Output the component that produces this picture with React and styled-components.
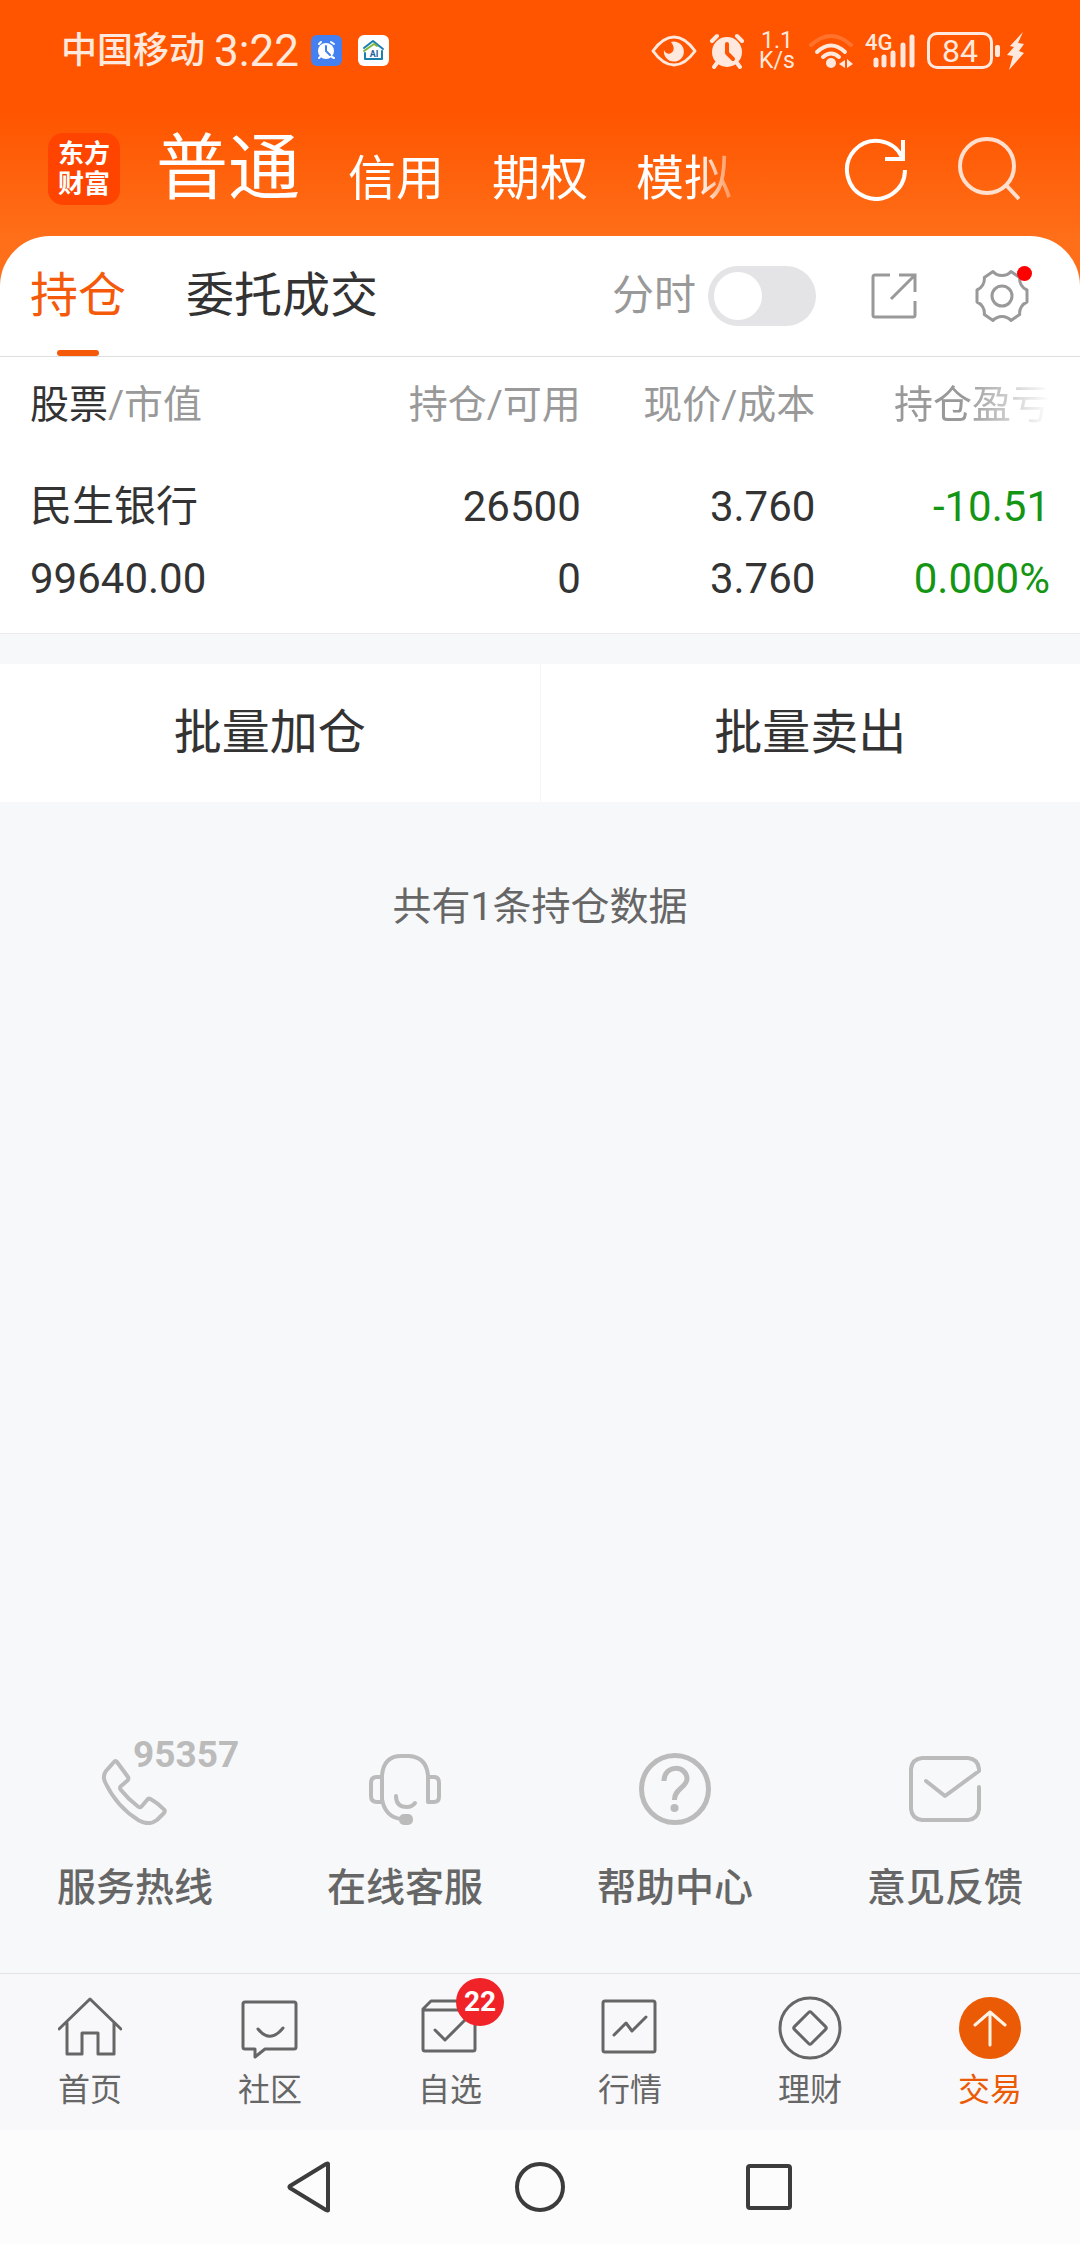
import { useState } from "react";
import styled, { createGlobalStyle } from "styled-components";

const holdings = [
	{
		name: "民生银行",
		value: "99640.00",
		amount: "26500",
		available: "0",
		price: "3.760",
		cost: "3.760",
		profit: "-10.51",
		percent: "0.000%",
	},
];

const Icon = ({ size = 64, width, height, stroke = 2, children }) => (
	<svg
		width={width || size}
		height={height || size}
		viewBox={`0 0 ${width || size} ${height || size}`}
		fill="none"
		stroke="currentColor"
		strokeWidth={stroke}
		strokeLinecap="round"
		strokeLinejoin="round"
		aria-hidden="true"
	>
		{children}
	</svg>
);

const EyeIcon = () => (
	<Icon width={46} height={34} stroke={3}>
		<path d="M2 17Q12 3 23 3T44 17Q34 31 23 31T2 17Z" />
		<path
			d="M20 8A10 10 0 1 1 13 16C16 24 28 18 20 8Z"
			fill="currentColor"
			stroke="none"
		/>
	</Icon>
);

const AlarmIcon = () => (
	<Icon size={36} stroke={4}>
		<circle cx="18" cy="19" r="15" fill="currentColor" stroke="none" />
		<path d="M3 8l5-5M28 3l5 5M8 30l-3 4M28 30l3 4" />
		<path d="M18 11v9l6 6" stroke="#ff5500" />
	</Icon>
);

const WifiIcon = () => (
	<Icon width={44} height={36} stroke={4}>
		<path d="M2 12Q22-6 42 12" opacity="0.2" />
		<path d="M8 19Q22 6 36 19" />
		<path d="M14 24Q22 17 30 24" />
		<circle cx="22" cy="30" r="5" fill="currentColor" stroke="none" />
		<path
			d="M30 31l6-4v8zM38 26v9l6-4z"
			fill="currentColor"
			stroke="none"
		/>
	</Icon>
);

const SignalIcon = () => (
	<Icon width={50} height={36} stroke={5}>
		<path d="M11 27v5M19 24v8M28 20v12M38 12v20M47 4v28" />
	</Icon>
);

const BoltIcon = () => (
	<Icon width={17} height={38}>
		<path
			d="M16 0L3 14l4 1-7 8 6 1-4 14L17 21l-5-2 5-7-6-1z"
			fill="currentColor"
			stroke="none"
		/>
	</Icon>
);

const ClockAppIcon = () => (
	<Icon size={31} stroke={2}>
		<rect width="31" height="31" rx="6" fill="#4480ef" stroke="none" />
		<circle cx="15" cy="16" r="8" fill="#fff" stroke="none" />
		<path d="M8 9l2-2M20 7l3 2M9 22l-1 1M21 22l2 1" stroke="#fff" />
		<path d="M15 11v5l4 4" stroke="#4480ef" />
	</Icon>
);

const HomeAppIcon = () => (
	<Icon size={31} stroke={2}>
		<rect width="31" height="31" rx="6" fill="#fff" stroke="none" />
		<path d="M6 13L15 6l10 8M7 18v6h17v-8" stroke="#1b7fae" />
		<path d="M6 16l10-7 3 2" stroke="#7db83a" />
		<text
			x="16"
			y="22"
			fill="#1f5f9f"
			stroke="none"
			fontSize="9"
			fontWeight="700"
			textAnchor="middle"
		>
			AI
		</text>
	</Icon>
);

const RefreshIcon = () => (
	<svg width="64" height="64" viewBox="0 0 64 64" fill="none" stroke="currentColor" strokeWidth="4">
		<path d="M61 33A29 29 0 1 1 58 20" />
		<path d="M59 3v19H41" />
	</svg>
);

const SearchIcon = () => (
	<svg width="64" height="64" viewBox="0 0 64 64" fill="none" stroke="currentColor" strokeWidth="4">
		<circle cx="31" cy="29" r="27" />
		<path d="M50 48l13 14" />
	</svg>
);

const ShareIcon = () => (
	<svg width="48" height="48" viewBox="0 0 48 48" fill="none" stroke="currentColor" strokeWidth="3">
		<path d="M20 3H5Q3 3 3 5V43Q3 45 5 45H43Q45 45 45 43V29M29 3H45V20M45 3L21 27" />
	</svg>
);

const GearIcon = () => (
	<Icon size={60} stroke={3}>
		<path d="M55 36A12 12 0 0 0 47.7 48.5L39 54.5A12 12 0 0 0 21 54.5L12.3 48.5A12 12 0 0 0 5 36V24A12 12 0 0 0 12.3 11.5L21 5.5A12 12 0 0 0 39 5.5L47.7 11.5A12 12 0 0 0 55 24Z" />
		<circle cx="30" cy="30" r="10" />
	</Icon>
);

const services = [
	{
		label: "服务热线",
		number: "95357",
		icon: (
			<Icon size={72} stroke={4}>
				<path d="M15 9Q16.500 7 18 9L29 24Q30 26 28.500 27.500L21.500 33.500Q20.500 35 21.500 36.500Q29 46 39 53.500Q41 55 42.500 53.500L48 47Q49.500 45 51.500 46Q59 50 65 56.500Q66.500 58 65 60L58 67Q50 73 40 67.500Q18 54 6.500 30Q3 23 7 18Z" />
			</Icon>
		),
	},
	{
		label: "在线客服",
		icon: (
			<Icon size={72} stroke={4}>
				<path d="M13 24V46Q16 64 32 66M13 24V22Q15 3 32 3H40Q57 4 59 22V49H65Q70 49 70 44V30Q70 24 65 24H59M13 24H8Q2 24 2 30V43Q2 49 8 49H13" />
				<path d="M27 43Q27 54 38 54Q43 54 46 50" />
				<rect x="30" y="61" width="14" height="11" rx="5" fill="currentColor" stroke="none" />
			</Icon>
		),
	},
	{
		label: "帮助中心",
		icon: (
			<svg width="72" height="72" viewBox="0 0 72 72" fill="none" stroke="currentColor" strokeWidth="5">
				<circle cx="36" cy="36" r="33.500" />
				<path d="M25 28C25 11 48 12 48 26C48 34 35 36 35.500 47" />
				<circle cx="35.500" cy="55" r="4" fill="currentColor" stroke="none" />
			</svg>
		),
	},
	{
		label: "意见反馈",
		icon: (
			<Icon size={72} stroke={4}>
				<path d="M70 34V56Q69 66 59 67H13Q3 66 2 56V16Q3 6 13 5H59Q69 6 70 16V18L36 43L17 28" />
			</Icon>
		),
	},
];

const tabs = [
	{
		label: "首页",
		icon: <path d="M1 33L32 3l31 30M9 27V58H24V37H40V58H56V27" />,
	},
	{
		label: "社区",
		icon: (
			<>
				<path d="M7 6H56Q58 6 58 8V51Q58 53 56 53H27L17 61V53H7Q5 53 5 51V8Q5 6 7 6Z" />
				<path d="M20 33Q32 48 45 32" />
			</>
		),
	},
	{
		label: "自选",
		badge: "22",
		icon: (
			<>
				<path d="M5 14H57V53Q57 55 55 55H7Q5 55 5 53V13L13 5H49L57 13" />
				<path d="M17 34l10 10L47 24" />
			</>
		),
	},
	{
		label: "行情",
		icon: (
			<>
				<rect x="5" y="5" width="52" height="51" rx="2" />
				<path d="M16 39L28 27l6 8L48 21" />
			</>
		),
	},
	{
		label: "理财",
		icon: (
			<>
				<circle cx="32" cy="32" r="30" />
				<rect x="20" y="20" width="24" height="24" rx="2" transform="rotate(45 32 32)" />
			</>
		),
	},
	{
		label: "交易",
		active: true,
		icon: (
			<>
				<circle cx="32" cy="32" r="31" fill="currentColor" stroke="none" />
				<path d="M32 49V16M17 29L32 16l15 13" stroke="#fff3e6" />
			</>
		),
	},
];

const App = () => {
	const [timeline, setTimeline] = useState(false);

	return (
		<Page>
			<GlobalStyle />
			<Top>
				<StatusBar>
					<Carrier>中国移动</Carrier>
					<Clock>3:22</Clock>
					<StatusApps>
						<ClockAppIcon />
						<HomeAppIcon />
					</StatusApps>
					<StatusIcons>
						<EyeIcon />
						<AlarmIcon />
						<Speed>
							1.1
							<br />
							K/s
						</Speed>
						<WifiIcon />
						<Signal>
							<SignalIcon />
							<Network>4G</Network>
						</Signal>
						<Power>
							<Battery>84</Battery>
							<BoltIcon />
						</Power>
					</StatusIcons>
				</StatusBar>
				<Header>
					<Logo>
						东方
						<br />
						财富
					</Logo>
					<AccountNav aria-label="账户">
						<AccountButton $active>普通</AccountButton>
						<AccountButton>信用</AccountButton>
						<AccountButton>期权</AccountButton>
						<AccountButton>模拟</AccountButton>
					</AccountNav>
					<HeaderActions>
						<IconButton aria-label="刷新">
							<RefreshIcon />
						</IconButton>
						<IconButton aria-label="搜索" $soft>
							<SearchIcon />
						</IconButton>
					</HeaderActions>
				</Header>
			</Top>

			<Panel>
				<PanelBar>
					<PanelTab $active>持仓</PanelTab>
					<PanelTab>委托成交</PanelTab>
					<PanelTools>
						<SwitchLabel htmlFor="timeline">
							分时
							<Switch
								id="timeline"
								type="checkbox"
								role="switch"
								checked={timeline}
								onChange={(event) => setTimeline(event.target.checked)}
							/>
						</SwitchLabel>
						<IconButton aria-label="分享">
							<ShareIcon />
						</IconButton>
						<IconButton aria-label="设置">
							<GearIcon />
							<Dot />
						</IconButton>
					</PanelTools>
				</PanelBar>
				<Table>
					<thead>
						<tr>
							<HeadCell scope="col">
								<Strong>股票</Strong>/市值
							</HeadCell>
							<HeadCell scope="col">持仓/可用</HeadCell>
							<HeadCell scope="col">现价/成本</HeadCell>
							<HeadCell scope="col">
								<Fade>持仓盈亏</Fade>
							</HeadCell>
						</tr>
					</thead>
					<tbody>
						{holdings.map((item) => (
							<tr key={item.name}>
								<Cell>
									<Line>{item.name}</Line>
									<Line>{item.value}</Line>
								</Cell>
								<Cell>
									<Line>{item.amount}</Line>
									<Line>{item.available}</Line>
								</Cell>
								<Cell>
									<Line>{item.price}</Line>
									<Line>{item.cost}</Line>
								</Cell>
								<Cell $down>
									<Line>{item.profit}</Line>
									<Line>{item.percent}</Line>
								</Cell>
							</tr>
						))}
					</tbody>
				</Table>
			</Panel>

			<Batch>
				<BatchButton>批量加仓</BatchButton>
				<BatchButton>批量卖出</BatchButton>
			</Batch>
			<Summary>共有1条持仓数据</Summary>

			<Services>
				{services.map((item) => (
					<ServiceLink key={item.label} href="#">
						<IconBox>
							{item.icon}
							{item.number && <Hotline>{item.number}</Hotline>}
						</IconBox>
						{item.label}
					</ServiceLink>
				))}
			</Services>

			<TabBar>
				{tabs.map((item) => (
					<TabLink key={item.label} href="#" $active={item.active}>
						<IconBox>
							<Icon stroke={3}>{item.icon}</Icon>
							{item.badge && <Badge>{item.badge}</Badge>}
						</IconBox>
						{item.label}
					</TabLink>
				))}
			</TabBar>

			<SystemBar>
				<IconButton aria-label="返回">
					<Icon size={56} stroke={4}>
						<path d="M46 5V51Q46 52 44 51L8 29Q7 28 8 27L44 5Q46 4 46 5Z" />
					</Icon>
				</IconButton>
				<IconButton aria-label="主屏幕">
					<Icon size={56} stroke={4}>
						<circle cx="28" cy="28" r="23" />
					</Icon>
				</IconButton>
				<IconButton aria-label="最近任务">
					<Icon size={56} stroke={4}>
						<rect x="6" y="7" width="42" height="42" rx="2" />
					</Icon>
				</IconButton>
			</SystemBar>
		</Page>
	);
};

const GlobalStyle = createGlobalStyle`
	* {
		box-sizing: border-box;
	}

	body {
		margin: 0;
		background: #f7f8fa;
		color: #333;
		font-family: Roboto, "Noto Sans CJK SC", sans-serif;
	}

	button {
		border: 0;
		padding: 0;
		background: none;
		color: inherit;
		font: inherit;
		cursor: pointer;
	}

	a {
		color: inherit;
		text-decoration: none;
	}

	svg {
		display: block;
		flex: none;
	}
`;

const Page = styled.div`
	min-height: 100vh;
	display: flex;
	flex-direction: column;
`;

const Top = styled.div`
	margin-bottom: -60px;
	padding-bottom: 60px;
	background: linear-gradient(#ff5500 112px, #ff6e18 236px);
	color: #fff;
`;

const StatusBar = styled.div`
	height: 101px;
	padding: 0 56px 0 61px;
	display: flex;
	align-items: center;
	color: #ffe9de;
`;

const Carrier = styled.span`
	font-size: 36px;
	font-weight: 500;
	line-height: 48px;
`;

const Clock = styled.span`
	margin-left: 9px;
	font-size: 44px;
	line-height: 48px;
`;

const StatusApps = styled.div`
	margin-left: 12px;
	display: flex;
	gap: 16px;
`;

const StatusIcons = styled.div`
	margin-left: auto;
	display: flex;
	align-items: center;
	gap: 12px;
`;

const Speed = styled.div`
	width: 40px;
	font-size: 23px;
	line-height: 20px;
	text-align: center;
`;

const Signal = styled.div`
	position: relative;
`;

const Network = styled.span`
	position: absolute;
	top: 0;
	left: 0;
	font-size: 22px;
	font-weight: 500;
	line-height: 20px;
`;

const Power = styled.div`
	display: flex;
	align-items: center;
	gap: 14px;
`;

const Battery = styled.div`
	position: relative;
	width: 66px;
	height: 37px;
	border: 3px solid;
	border-radius: 10px;
	font-size: 32px;
	line-height: 32px;
	text-align: center;

	&:after {
		content: "";
		position: absolute;
		top: 10px;
		right: -10px;
		width: 5px;
		height: 12px;
		border-radius: 2px;
		background: currentColor;
	}
`;

const Header = styled.header`
	height: 135px;
	padding: 0 60px 0 48px;
	display: flex;
	align-items: center;
`;

const Logo = styled.div`
	width: 72px;
	height: 72px;
	padding: 6px 0;
	border-radius: 15px;
	background: #ff4400;
	font-size: 26px;
	font-weight: 700;
	line-height: 30px;
	text-align: center;
`;

const AccountNav = styled.nav`
	flex: 1;
	min-width: 0;
	margin-left: 36px;
	display: flex;
	align-items: flex-end;
	gap: 48px;
	mask-image: linear-gradient(
		to right,
		#000 calc(100% - 146px),
		transparent calc(100% - 98px)
	);
`;

const AccountButton = styled.button`
	flex: none;
	font-size: ${(props) => (props.$active ? "72px" : "48px")};
	line-height: ${(props) => (props.$active ? "84px" : "64px")};
`;

const HeaderActions = styled.div`
	display: flex;
	gap: 48px;
`;

const IconButton = styled.button`
	position: relative;
	opacity: ${(props) => (props.$soft ? 0.8 : 1)};
`;

const Panel = styled.main`
	border-radius: 50px 50px 0 0;
	border-bottom: 1px solid #ebebed;
	background: #fff;
`;

const PanelBar = styled.div`
	height: 121px;
	padding: 0 48px 0 30px;
	border-bottom: 1px solid #dedede;
	display: flex;
	gap: 60px;
`;

const PanelTab = styled.button`
	position: relative;
	color: ${(props) => (props.$active ? "#f55a0a" : "#333")};
	font-size: 48px;
	line-height: 64px;

	&:after {
		content: "";
		display: ${(props) => (props.$active ? "block" : "none")};
		position: absolute;
		bottom: 0;
		left: calc(50% - 21px);
		width: 42px;
		height: 6px;
		border-radius: 3px;
		background: currentColor;
	}
`;

const PanelTools = styled.div`
	margin-left: auto;
	display: flex;
	align-items: center;
	gap: 54px;
	color: #999;
`;

const SwitchLabel = styled.label`
	display: flex;
	align-items: center;
	gap: 12px;
	font-size: 42px;
	line-height: 60px;
`;

const Switch = styled.input`
	appearance: none;
	width: 108px;
	height: 60px;
	margin: 0;
	padding: 6px;
	border-radius: 30px;
	background: #e4e4e6;
	cursor: pointer;

	&:before {
		content: "";
		display: block;
		width: 48px;
		height: 48px;
		border-radius: 50%;
		background: #fff;
	}

	&:checked {
		background: #f55a0a;
	}

	&:checked:before {
		margin-left: auto;
	}
`;

const Dot = styled.span`
	position: absolute;
	top: 0;
	right: 0;
	width: 15px;
	height: 15px;
	border-radius: 50%;
	background: #f00;
`;

const Table = styled.table`
	width: calc(100% - 60px);
	margin: 0 30px;
	border-collapse: collapse;
	table-layout: fixed;
`;

const HeadCell = styled.th`
	width: 23%;
	height: 96px;
	padding: 0;
	color: #999;
	font-size: 39px;
	font-weight: 400;
	line-height: 60px;
	text-align: right;
	white-space: nowrap;

	&:first-child {
		width: 31%;
		text-align: left;
	}
`;

const Strong = styled.span`
	color: #333;
`;

const Fade = styled.span`
	mask-image: linear-gradient(to right, #000 45%, transparent);
`;

const Cell = styled.td`
	padding: 18px 0;
	color: ${(props) => (props.$down ? "#149614" : "#333")};
	font-size: 42px;
	text-align: right;

	&:first-child {
		text-align: left;
	}
`;

const Line = styled.div`
	line-height: 72px;
`;

const Batch = styled.div`
	margin-top: 30px;
	display: flex;
	background: #fff;
`;

const BatchButton = styled.button`
	flex: 1;
	height: 138px;
	font-size: 48px;
	line-height: 64px;

	&:first-child {
		border-right: 1px solid #f5f5f7;
	}
`;

const Summary = styled.p`
	margin: 80px 0;
	color: #666;
	font-size: 39px;
	line-height: 50px;
	text-align: center;
`;

const Services = styled.div`
	margin-top: auto;
	padding-bottom: 60px;
	display: grid;
	grid-template-columns: repeat(4, 1fr);
`;

const ServiceLink = styled.a`
	display: flex;
	flex-direction: column;
	align-items: center;
	gap: 38px;
	color: #666;
	font-size: 39px;
	font-weight: 500;
	line-height: 50px;

	svg {
		color: #bbb;
	}
`;

const IconBox = styled.span`
	position: relative;
`;

const Hotline = styled.span`
	position: absolute;
	top: -16px;
	left: 34px;
	color: #bbb;
	font-size: 37px;
	font-weight: 700;
	line-height: 36px;
`;

const TabBar = styled.nav`
	border-top: 1px solid #e2e3e5;
	background: #f8f8fa;
	display: grid;
	grid-template-columns: repeat(6, 1fr);
`;

const TabLink = styled.a`
	padding: 22px 0 20px;
	display: flex;
	flex-direction: column;
	align-items: center;
	gap: 10px;
	color: ${(props) => (props.$active ? "#eb5a05" : "#666")};
	font-size: 32px;
	line-height: 40px;
`;

const Badge = styled.span`
	position: absolute;
	top: -18px;
	left: 38px;
	width: 48px;
	height: 48px;
	border-radius: 50%;
	background: #f02428;
	color: #fff;
	font-size: 28px;
	font-weight: 700;
	line-height: 48px;
	text-align: center;
`;

const SystemBar = styled.div`
	height: 114px;
	background: #fcfcfc;
	color: #3c3c3c;
	display: flex;
	align-items: center;
	justify-content: center;
	gap: 174px;
`;

export default App;
